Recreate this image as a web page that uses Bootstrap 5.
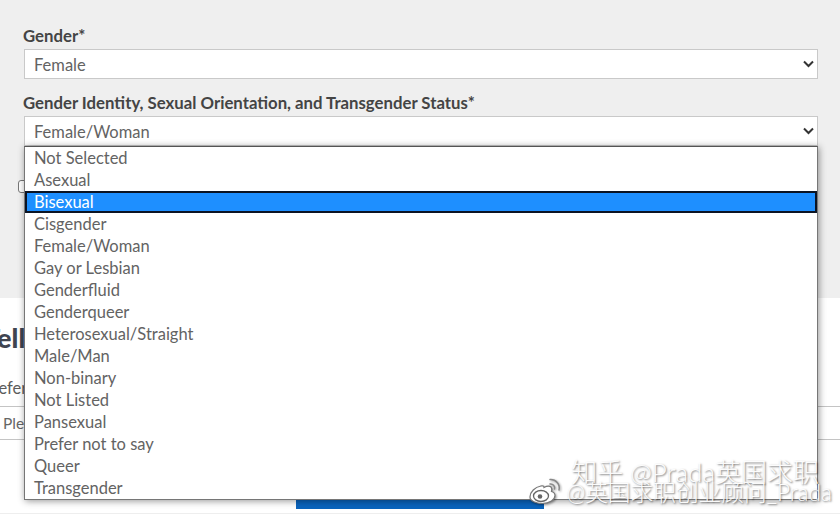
<!DOCTYPE html>
<html lang="en">
<head>
  <meta charset="UTF-8">
  <title>Gender form</title>
  <link href="https://cdn.jsdelivr.net/npm/bootstrap@5.3.0/dist/css/bootstrap.min.css" rel="stylesheet">
  <style>
    html, body {
      height: 515px;
      overflow: hidden;
    }
    body {
      font-family: Lato, "Noto Sans CJK SC", sans-serif;
      color: #3c3c3c;
      background-color: #fff;
    }
    .top-band {
      background-color: #efefef;
      height: 298px;
      padding: 26px 23px 0 23px;
    }
    .field-label {
      font-size: 16.75px;
      font-weight: 700;
      line-height: 19px;
      margin-bottom: 4px;
      color: #444;
    }
    .field-wrap {
      margin-left: 1px;
      width: 794px;
    }
    .select-box {
      height: 30px;
      border: 1px solid #c9c9c9;
      background-color: #fff;
      font-size: 16.5px;
      line-height: 30px;
      padding-left: 9px;
      color: #636363;
      margin-bottom: 14px;
    }
    .select-box svg {
      position: absolute;
      right: 4px;
      top: 11px;
    }
    .drop-list {
      z-index: 5;
      top: 30px;
      left: 0;
      width: 794px;
      height: 354px;
      background-color: #fff;
      border: 1px solid #767676;
      border-top-color: #555;
      box-shadow: 1px 1px 7px rgba(0, 0, 0, .42);
      font-size: 16.5px;
    }
    .drop-list li {
      height: 22px;
      line-height: 22px;
      padding-left: 9px;
      color: #636363;
    }
    .drop-list li.picked {
      background-color: #1e8fff;
      color: #fff;
      outline: 2px solid #0b1424;
      outline-offset: -2px;
    }
    .tick-box {
      left: -6px;
      top: 64px;
      width: 14px;
      height: 13px;
      border: 1px solid #777;
      border-radius: 3px;
      background-color: #fff;
    }
    .low-band {
      padding-top: 24px;
      height: 217px;
      overflow: hidden;
    }
    .low-title {
      font-size: 27px;
      font-weight: 900;
      line-height: 32px;
      color: #3f4450;
      margin: 0 0 0 -16px;
      white-space: nowrap;
    }
    .low-hint {
      font-size: 16.5px;
      line-height: 20px;
      margin: 24px 0 8px -17px;
      color: #5c5c5c;
      white-space: nowrap;
    }
    .low-input {
      height: 34px;
      border-top: 1px solid #c4c4c4;
      border-bottom: 1px solid #c4c4c4;
      font-size: 15.5px;
      line-height: 32px;
      padding-left: 3px;
      color: #666;
      white-space: nowrap;
    }
    .blue-btn {
      left: 296px;
      top: 202px;
      width: 248px;
      height: 9px;
      background-color: #0a64bd;
    }
    .foot-rule {
      left: 0;
      right: 0;
      top: 215px;
      height: 1px;
      background-color: #eee;
    }
    .mark-wrap {
      z-index: 10;
      left: 0;
      top: 0;
      width: 840px;
      height: 515px;
      color: rgba(255, 255, 255, .95);
      text-shadow: 1px 1px 2px rgba(0, 0, 0, .55);
      white-space: nowrap;
      pointer-events: none;
    }
    .mark-one {
      position: absolute;
      right: 21px;
      top: 456px;
      font-size: 26px;
      font-weight: 300;
      line-height: 32px;
    }
    .mark-two {
      position: absolute;
      right: 8px;
      top: 479px;
      font-size: 22.7px;
      font-weight: 300;
      line-height: 28px;
    }
    .mark-icon {
      position: absolute;
      left: 528px;
      top: 477px;
      filter: drop-shadow(1px 1px 1px rgba(0, 0, 0, .4));
    }
  </style>
</head>
<body>
  <div class="top-band">
    <div class="field-label form-label">Gender*</div>
    <div class="field-wrap position-relative">
      <div class="select-box">
        Female
        <svg width="11" height="8" viewBox="0 0 11 8"><path d="M1 1.500 5.500 6 10 1.500" fill="none" stroke="#333" stroke-width="2"/></svg>
      </div>
    </div>
    <div class="field-label form-label">Gender Identity, Sexual Orientation, and Transgender Status*</div>
    <div class="field-wrap position-relative">
      <div class="select-box">
        Female/Woman
        <svg width="11" height="8" viewBox="0 0 11 8"><path d="M1 1.500 5.500 6 10 1.500" fill="none" stroke="#333" stroke-width="2"/></svg>
      </div>
      <span class="tick-box position-absolute"></span>
      <ul class="drop-list list-unstyled position-absolute m-0">
        <li>Not Selected</li>
        <li>Asexual</li>
        <li class="picked">Bisexual</li>
        <li>Cisgender</li>
        <li>Female/Woman</li>
        <li>Gay or Lesbian</li>
        <li>Genderfluid</li>
        <li>Genderqueer</li>
        <li>Heterosexual/Straight</li>
        <li>Male/Man</li>
        <li>Non-binary</li>
        <li>Not Listed</li>
        <li>Pansexual</li>
        <li>Prefer not to say</li>
        <li>Queer</li>
        <li>Transgender</li>
      </ul>
    </div>
  </div>
  <div class="low-band position-relative">
    <div class="low-title">Tell us</div>
    <div class="low-hint">Prefer</div>
    <div class="low-input">Please</div>
    <div class="blue-btn position-absolute"></div>
    <div class="foot-rule position-absolute"></div>
  </div>
  <div class="mark-wrap position-absolute">
    <svg class="mark-icon" width="34" height="28" viewBox="0 0 34 28"><path d="M13 9C7 10 2 15 2 20c0 4 6 6.500 12 6.500 8 0 13-4 13-8 0-2.500-2-3.500-3.500-4 .5-2 .5-3.500-.5-4.500-2-1.500-5-.5-7 .5 0-1.500-1-2-3.500-1.500z" fill="#fff" stroke="#777" stroke-width="1.200"/><ellipse cx="13" cy="19" rx="7.500" ry="5.500" fill="none" stroke="#666" stroke-width="1.300"/><circle cx="12" cy="19.500" r="2.300" fill="#666"/><path d="M22 2.500a8.500 8.500 0 0 1 9 10.500M22 7a4 4 0 0 1 4.500 5" fill="none" stroke="#888" stroke-width="1.500" stroke-linecap="round"/></svg>
    <div class="mark-one">知乎 @Prada英国求职</div>
    <div class="mark-two">@英国求职创业顾问_Prada</div>
  </div>
</body>
</html>
